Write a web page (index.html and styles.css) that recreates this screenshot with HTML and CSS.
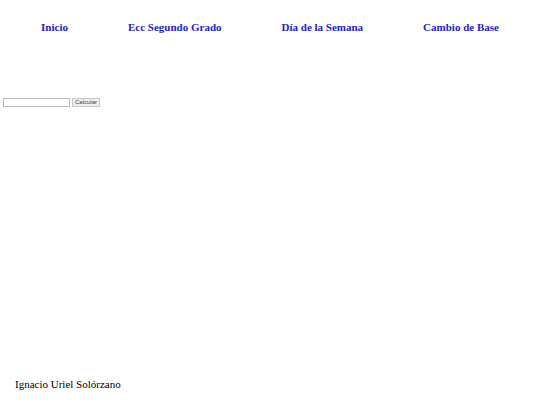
FILE: index.html
```html
<!DOCTYPE html>
<html lang="es">
<head>
<meta charset="utf-8">
<title>Calculadora</title>
<link rel="stylesheet" href="styles.css">
</head>
<body>
<nav class="nav">
  <a class="nav-link" href="#">Inicio</a>
  <a class="nav-link" href="#">Ecc Segundo Grado</a>
  <a class="nav-link" href="#">Día de la Semana</a>
  <a class="nav-link" href="#">Cambio de Base</a>
</nav>
<main class="main">
  <form class="form">
    <input class="field" type="text">
    <button class="btn" type="button">Calcular</button>
  </form>
</main>
<footer class="footer">Ignacio Uriel Solórzano</footer>
</body>
</html>
```
FILE: styles.css
```css
html, body {
  margin: 0;
  padding: 0;
  background: #fff;
}
body {
  width: 540px;
  height: 405px;
  display: flex;
  flex-direction: column;
  font-family: "Liberation Serif", "Times New Roman", serif;
}
.nav {
  display: flex;
  justify-content: center;
  gap: 60px;
  padding-top: 21px;
}
.nav-link {
  font-size: 11px;
  font-weight: bold;
  color: #2222cc;
  text-decoration: none;
  line-height: 13px;
}
.main {
  flex: 1;
  padding: 64px 0 0 3px;
}
.form {
  display: flex;
  align-items: center;
  gap: 2px;
  margin: 0;
}
.field {
  width: 67px;
  height: 9px;
  box-sizing: border-box;
  border: 1px solid #bbb;
  padding: 0;
  font-size: 6px;
  margin: 0;
}
.btn {
  height: 9px;
  width: 28px;
  box-sizing: border-box;
  border: 1px solid #c8c8c8;
  background: #efefef;
  font-family: "Liberation Sans", Arial, sans-serif;
  font-size: 6px;
  color: #444;
  padding: 0;
  margin: 0;
  line-height: 7px;
}
.footer {
  font-size: 11px;
  padding: 0 0 14px 15px;
  line-height: 13px;
}
```
